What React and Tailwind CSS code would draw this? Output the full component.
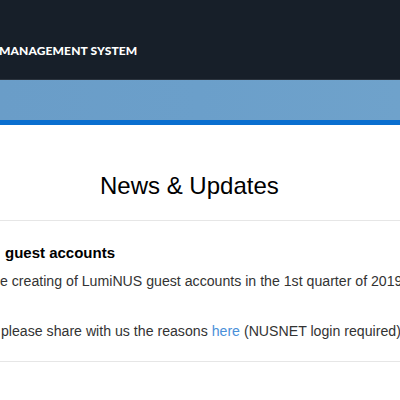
/**
 * News & Updates landing strip — dark top bar, banner, and announcement list.
 */
function App() {
    return (
        <div className="w-[400px] h-[400px] overflow-hidden bg-white font-['Liberation_Sans',Arial,sans-serif]">
            {/* Top bar with product name */}
            <header className="h-[80px] bg-[#171f29] border-b border-[#2b333d] pt-[42px]">
                <p className="-ml-[1px] font-['Lato',sans-serif] font-black text-[12px] leading-[18px] tracking-[0.01em] text-white whitespace-nowrap">
                    MANAGEMENT SYSTEM
                </p>
            </header>

            {/* Banner image area */}
            <div className="h-[40px] bg-gradient-to-r from-[#6a9dc8] via-[#6b9fca] to-[#6fa2cb]" />
            <div className="h-[5px] bg-[#0a6fcf]" />

            <main className="pt-[47px]">
                <h2 className="ml-[100px] text-[24px] leading-[28px] text-black whitespace-nowrap">
                    News &amp; Updates
                </h2>
                <div className="mt-[20px] h-px bg-[#e6e6e6]" />

                <article className="pt-[22px] text-[#333]">
                    <h4 className="ml-[5px] text-[15px] leading-[20px] font-bold text-black whitespace-nowrap">
                        guest accounts
                    </h4>
                    <p className="mt-[8px] text-[14.15px] leading-[20px] whitespace-nowrap">
                        e creating of LumiNUS guest accounts in the 1st quarter of 2019.
                    </p>
                    <p className="mt-[30px] ml-[1px] text-[14.15px] leading-[20px] whitespace-nowrap">
                        please share with us the reasons{" "}
                        <a href="#" className="text-[#4a90d9]">here</a>{" "}
                        (NUSNET login required).
                    </p>
                </article>
                <div className="mt-[20px] h-px bg-[#e6e6e6]" />
            </main>
        </div>
    );
}

export default App;
